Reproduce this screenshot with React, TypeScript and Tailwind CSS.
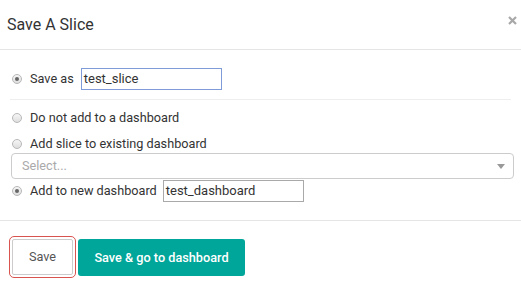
import React from "react";

function Radio({ checked }: { checked?: boolean }) {
  return (
    <span className="ml-[12px] w-[10px] h-[10px] shrink-0 rounded-full border border-[#b8b8b8] bg-gradient-to-b from-[#f6f6f6] to-[#dedede] flex items-center justify-center">
      {checked && <span className="w-[4px] h-[4px] rounded-full bg-[#666]" />}
    </span>
  );
}

export default function App() {
  return (
    <div
      className="w-[521px] h-[291px] bg-white text-[#333] overflow-hidden flex flex-col"
      style={{ fontFamily: "Roboto, 'Liberation Sans', sans-serif" }}
    >
      <div className="h-[50px] shrink-0 border-b border-[#e5e5e5] flex items-center justify-between pl-[7px] pr-[4px]">
        <div className="text-[16px] leading-none text-[#333]">Save A Slice</div>
        <svg width="9" height="9" viewBox="0 0 9 9" className="mb-[8px]">
          <path d="M1 1 L8 8 M8 1 L1 8" stroke="#a8a8a8" strokeWidth="2.2" />
        </svg>
      </div>

      <div className="h-[170px] shrink-0 flex flex-col pt-[18px] text-[12.7px]">
        <div className="h-[22px] flex items-center">
          <Radio checked />
          <span className="ml-[8px]">Save as</span>
          <div className="ml-[7px] w-[141px] h-[22px] border border-[#7f9bd8] flex items-center pl-[2px] text-[13px]">
            test_slice
          </div>
        </div>

        <div className="mt-[9px] ml-[10px] mr-[10px] h-px bg-[#eeeeee]" />

        <div className="mt-[9px] h-[18px] flex items-center">
          <Radio />
          <span className="ml-[8px]">Do not add to a dashboard</span>
        </div>

        <div className="mt-[8px] h-[18px] flex items-center">
          <Radio />
          <span className="ml-[8px]">Add slice to existing dashboard</span>
        </div>

        <div className="ml-[11px] w-[503px] h-[26px] border border-[#cccccc] rounded-[4px] flex items-center justify-between pl-[10px] pr-[8px]">
          <span className="text-[#aaaaaa]">Select...</span>
          <span className="w-0 h-0 border-l-[4px] border-r-[4px] border-t-[5px] border-l-transparent border-r-transparent border-t-[#999]" />
        </div>

        <div className="mt-[1px] h-[22px] flex items-center">
          <Radio checked />
          <span className="ml-[8px]">Add to new dashboard</span>
          <div className="ml-[6px] w-[141px] h-[22px] border border-[#a9a9a9] flex items-center pl-[2px] text-[13px]">
            test_dashboard
          </div>
        </div>
      </div>

      <div className="flex-1 border-t border-[#e5e5e5] pt-[18px] pl-[12px] flex items-start text-[12.7px]">
        <button className="w-[61px] h-[36px] border border-[#cccccc] rounded-[2px] bg-white text-[#555] outline outline-1 outline-offset-2 outline-[#d9534f]">
          Save
        </button>
        <button className="ml-[5px] w-[167px] h-[37px] rounded-[3px] bg-[#00a699] text-white font-medium">
          Save &amp; go to dashboard
        </button>
      </div>
    </div>
  );
}
